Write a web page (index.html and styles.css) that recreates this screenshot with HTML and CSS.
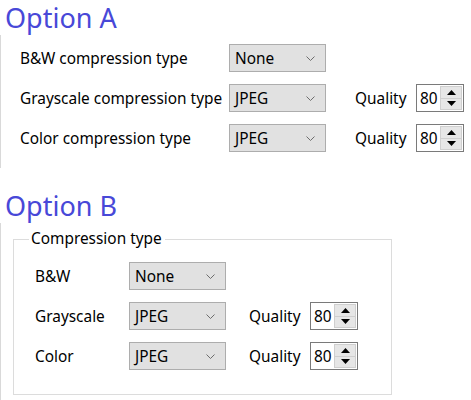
FILE: index.html
```html
<!DOCTYPE html>
<html>
<head>
<meta charset="utf-8">
<link rel="stylesheet" href="styles.css">
</head>
<body>
<section class="opt opt-a">
  <h2 class="title">Option A</h2>
  <div class="panel">
    <div class="row">
      <span class="lbl">B&amp;W compression type</span>
      <div class="combo"><span>None</span><svg class="chev" width="9" height="5" viewBox="0 0 9 5"><path d="M0.5 0.5 L4.5 4.5 L8.5 0.5" fill="none" stroke="#6d6d6d" stroke-width="1"/></svg></div>
    </div>
    <div class="row">
      <span class="lbl">Grayscale compression type</span>
      <div class="combo"><span>JPEG</span><svg class="chev" width="9" height="5" viewBox="0 0 9 5"><path d="M0.5 0.5 L4.5 4.5 L8.5 0.5" fill="none" stroke="#6d6d6d" stroke-width="1"/></svg></div>
      <span class="qlbl">Quality</span>
      <div class="spin"><span class="val">80</span><div class="btns"><div class="btn"><svg width="9" height="5" viewBox="0 0 9 5"><path d="M4.5 0 L9 5 L0 5 Z" fill="#000"/></svg></div><div class="btn"><svg width="9" height="5" viewBox="0 0 9 5"><path d="M0 0 L9 0 L4.5 5 Z" fill="#000"/></svg></div></div></div>
    </div>
    <div class="row">
      <span class="lbl">Color compression type</span>
      <div class="combo"><span>JPEG</span><svg class="chev" width="9" height="5" viewBox="0 0 9 5"><path d="M0.5 0.5 L4.5 4.5 L8.5 0.5" fill="none" stroke="#6d6d6d" stroke-width="1"/></svg></div>
      <span class="qlbl">Quality</span>
      <div class="spin"><span class="val">80</span><div class="btns"><div class="btn"><svg width="9" height="5" viewBox="0 0 9 5"><path d="M4.5 0 L9 5 L0 5 Z" fill="#000"/></svg></div><div class="btn"><svg width="9" height="5" viewBox="0 0 9 5"><path d="M0 0 L9 0 L4.5 5 Z" fill="#000"/></svg></div></div></div>
    </div>
  </div>
</section>
<section class="opt opt-b">
  <h2 class="title">Option B</h2>
  <div class="panel">
    <fieldset class="group">
      <legend>Compression type</legend>
      <div class="row">
        <span class="lbl">B&amp;W</span>
        <div class="combo"><span>None</span><svg class="chev" width="9" height="5" viewBox="0 0 9 5"><path d="M0.5 0.5 L4.5 4.5 L8.5 0.5" fill="none" stroke="#6d6d6d" stroke-width="1"/></svg></div>
      </div>
      <div class="row">
        <span class="lbl">Grayscale</span>
        <div class="combo"><span>JPEG</span><svg class="chev" width="9" height="5" viewBox="0 0 9 5"><path d="M0.5 0.5 L4.5 4.5 L8.5 0.5" fill="none" stroke="#6d6d6d" stroke-width="1"/></svg></div>
        <span class="qlbl">Quality</span>
        <div class="spin"><span class="val">80</span><div class="btns"><div class="btn"><svg width="9" height="5" viewBox="0 0 9 5"><path d="M4.5 0 L9 5 L0 5 Z" fill="#000"/></svg></div><div class="btn"><svg width="9" height="5" viewBox="0 0 9 5"><path d="M0 0 L9 0 L4.5 5 Z" fill="#000"/></svg></div></div></div>
      </div>
      <div class="row">
        <span class="lbl">Color</span>
        <div class="combo"><span>JPEG</span><svg class="chev" width="9" height="5" viewBox="0 0 9 5"><path d="M0.5 0.5 L4.5 4.5 L8.5 0.5" fill="none" stroke="#6d6d6d" stroke-width="1"/></svg></div>
        <span class="qlbl">Quality</span>
        <div class="spin"><span class="val">80</span><div class="btns"><div class="btn"><svg width="9" height="5" viewBox="0 0 9 5"><path d="M4.5 0 L9 5 L0 5 Z" fill="#000"/></svg></div><div class="btn"><svg width="9" height="5" viewBox="0 0 9 5"><path d="M0 0 L9 0 L4.5 5 Z" fill="#000"/></svg></div></div></div>
      </div>
    </fieldset>
  </div>
</section>
</body>
</html>
```

FILE: styles.css
```css
html, body {
  margin: 0;
  padding: 0;
  background: #fff;
}
body {
  font-family: "Noto Sans", "Open Sans", sans-serif;
  font-size: 15.4px;
  color: #000;
  width: 471px;
  height: 400px;
  overflow: hidden;
}
.title {
  margin: 0;
  padding-left: 5px;
  font-weight: normal;
  font-size: 27px;
  line-height: 35px;
  color: #4848d8;
}
.panel {
  border-left: 1px solid #d9d9d9;
}
.opt-a .panel {
  padding: 9px 0 16px 19px;
  display: flex;
  flex-direction: column;
  gap: 12px;
}
.opt-b {
  margin-top: 20px;
}
.opt-b .panel {
  padding: 6px 0 10px 12px;
}
.row {
  display: flex;
  align-items: center;
  height: 28px;
}
.opt-a .lbl { width: 209px; }
.opt-a .qlbl { margin-left: 29px; width: 61px; }
.opt-b .lbl { width: 94px; }
.opt-b .qlbl { margin-left: 23px; width: 61px; }
.combo {
  box-sizing: border-box;
  width: 97px;
  height: 28px;
  background: #e1e1e1;
  border: 1px solid #adadad;
  display: flex;
  align-items: center;
  justify-content: space-between;
  padding: 0 10px 0 5px;
}
.chev { display: block; }
.spin {
  box-sizing: border-box;
  width: 48px;
  height: 28px;
  border: 1px solid #7a7a7a;
  background: #fff;
  display: flex;
  align-items: center;
  justify-content: space-between;
  padding: 1px 1px 1px 3px;
}
.btns {
  display: flex;
  flex-direction: column;
  height: 100%;
  width: 22px;
}
.btn {
  flex: 1;
  box-sizing: border-box;
  background: #e6e6e6;
  border: 1px solid #cfcfcf;
  display: flex;
  align-items: center;
  justify-content: center;
}
.btn + .btn { border-top: none; }
.btn svg { display: block; }
.group {
  margin: 0;
  box-sizing: border-box;
  width: 379px;
  height: 166px;
  border: 1px solid #dcdcdc;
  padding: 13px 0 0 21px;
  display: flex;
  flex-direction: column;
  gap: 12px;
}
.group legend {
  margin-left: -6px;
  padding: 0 3px 0 2px;
  line-height: 20px;
}
```
